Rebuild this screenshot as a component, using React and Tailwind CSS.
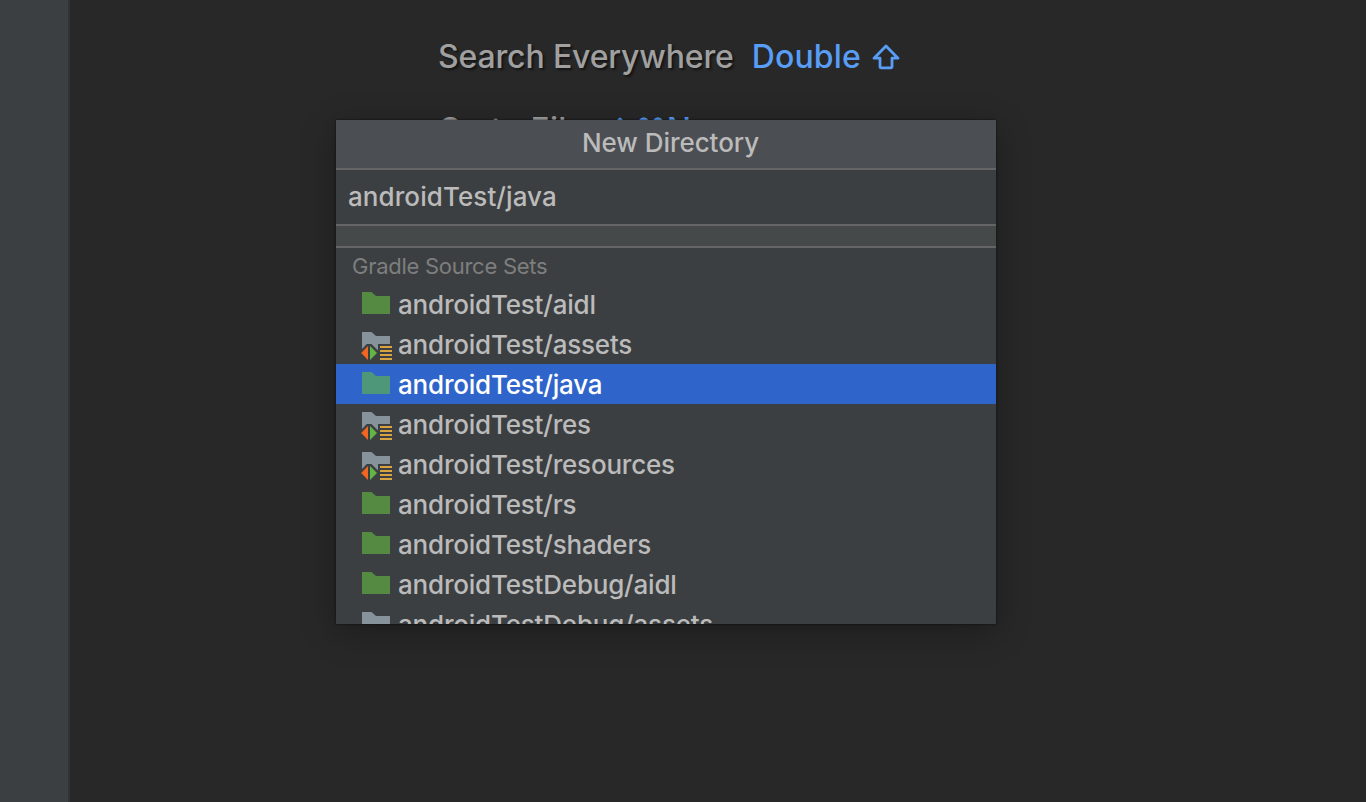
import React from 'react';

const directories = [
  { name: 'androidTest/aidl', kind: 'source' },
  { name: 'androidTest/assets', kind: 'resource' },
  { name: 'androidTest/java', kind: 'source', selected: true },
  { name: 'androidTest/res', kind: 'resource' },
  { name: 'androidTest/resources', kind: 'resource' },
  { name: 'androidTest/rs', kind: 'source' },
  { name: 'androidTest/shaders', kind: 'source' },
  { name: 'androidTestDebug/aidl', kind: 'source' },
  { name: 'androidTestDebug/assets', kind: 'resource' },
];

function SourceFolder({ selected }) {
  return (
    <svg viewBox="0 0 32 32" className="w-8 h-8 shrink-0">
      <path d="M2 4H11.5L16 8H30V26H2Z" fill={selected ? '#4f9779' : '#548a42'} />
    </svg>
  );
}

function ResourceFolder() {
  return (
    <svg viewBox="0 0 32 32" className="w-8 h-8 shrink-0">
      <path d="M2 4H11.5L16 8H30V16H18V22.5L11.5 16H6.8L2 21Z" fill="#87939a" />
      <path d="M8 18V32L1.2 25Z" fill="#f26522" />
      <path d="M10 18V32L17 25Z" fill="#62b543" />
      <path d="M20 18H32V20H20ZM20 22H32V24H20ZM20 26H32V28H20ZM20 30H32V32H20Z" fill="#d9a343" />
    </svg>
  );
}

function ShiftIcon() {
  return (
    <svg viewBox="0 0 28 26" className="w-7 h-[26px]" fill="none" stroke="#589df6" strokeWidth="2.8" strokeLinejoin="round">
      <path d="M14 2L26 14.2H20V22.5Q20 23.8 18.7 23.8H9.3Q8 23.8 8 22.5V14.2H2Z" />
    </svg>
  );
}

function NewDirectoryPopup() {
  return (
    <div className="absolute left-[336px] top-[120px] w-[660px] h-[504px] flex flex-col overflow-hidden bg-[#3c3f41] text-[#bbbbbb] shadow-[0_0_2px_rgba(0,0,0,0.7),0_8px_32px_rgba(0,0,0,0.3)]">
      <div className="h-[50px] shrink-0 pl-[9px] pb-[3px] flex items-center justify-center bg-[#4b4e52] border-b-2 border-[#656565] text-[26px] tracking-[-0.05px] font-[450]">
        New Directory
      </div>
      <div className="h-14 shrink-0 px-3 pb-px flex items-center border-b-2 border-[#656565] text-[26px] font-[450] tracking-[0.08px]">
        androidTest/java
      </div>
      <div className="h-[22px] shrink-0 bg-[#45494a] border-b-2 border-[#656565]" />
      <div className="h-9 shrink-0 px-4 flex items-center text-[22px] tracking-[-0.27px] text-[#7e7e7e]">Gradle Source Sets</div>

      {/* Directory suggestions */}
      <ul>
        {directories.map((dir) => (
          <li
            key={dir.name}
            className={`h-10 pl-6 flex items-center gap-1.5 text-[26px] tracking-[-0.2px] font-[450] ${dir.selected ? 'bg-[#2f65ca] text-white' : ''}`}
          >
            {dir.kind === 'source' ? <SourceFolder selected={dir.selected} /> : <ResourceFolder />}
            <span className="whitespace-nowrap">{dir.name}</span>
          </li>
        ))}
      </ul>
    </div>
  );
}

export default function App() {
  return (
    <div className="relative flex w-full h-[802px] overflow-hidden bg-[#282828] font-['Inter',sans-serif]">
      <aside className="w-[70px] shrink-0 bg-[#3c3f41] border-r-2 border-[#323232]" />
      <main className="flex-1 pl-[368px] pt-9 text-[32px] leading-[42px] font-[450] text-[#a0a0a0]">
        <div className="flex items-center">
          <span className="tracking-[-0.15px] [text-shadow:2px_2px_2px_#151515]">Search Everywhere</span>
          <span className="ml-[18px] mr-[11px] tracking-[0.15px] text-[#589df6]">Double</span>
          <ShiftIcon />
        </div>
        <div className="mt-[31px] flex items-center whitespace-nowrap">
          <span className="tracking-[0.4px] [text-shadow:2px_2px_2px_#151515]">Go to File</span>
          <span className="ml-5 flex items-center text-[#589df6]">
            <ShiftIcon />
            <span className="ml-px">⌘N</span>
          </span>
        </div>
      </main>
      <NewDirectoryPopup />
    </div>
  );
}
